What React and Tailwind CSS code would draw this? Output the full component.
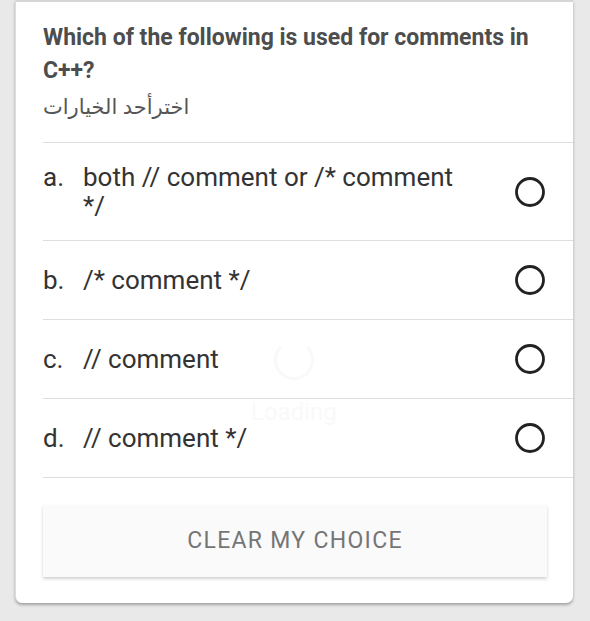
import React from 'react';

const OPTIONS = [
  { key: 'a', text: 'both // comment or /* comment */', tall: true },
  { key: 'b', text: '/* comment */' },
  { key: 'c', text: '// comment' },
  { key: 'd', text: '// comment */' },
];

function Radio() {
  return (
    <svg width="32" height="32" viewBox="0 0 32 32" className="shrink-0">
      <circle cx="16" cy="16" r="13.5" fill="none" stroke="#222" strokeWidth="2.8" />
    </svg>
  );
}

export default function App() {
  return (
    <div className="w-[590px] h-[621px] bg-[#e9e9e9] overflow-hidden" style={{ fontFamily: 'Roboto, "Noto Sans", sans-serif' }}>
      <div className="relative ml-[15px] w-[558px] bg-white rounded-b-[7px] shadow-[0_2px_3px_rgba(0,0,0,0.3)] border-l border-[#dcdcdc]">
        <div className="h-[2px] bg-[#d6d6d6]" />
        <div className="pl-[27px]">
          {/* question */}
          <div className="pt-[19px] pb-[19px] pr-[30px] border-b border-[#dedede]">
            <div className="text-[23px] leading-[33px] font-bold text-[#4d4d4d]">
              Which of the following is used for comments in C++?
            </div>
            <div className="mt-[2px] text-[21px] leading-[34px] text-[#555]" style={{ fontFamily: '"Noto Sans", "DejaVu Sans", sans-serif' }}>
              اخترأحد الخيارات
            </div>
          </div>

          {/* options */}
          {OPTIONS.map((o) => (
            <div
              key={o.key}
              className={`flex items-center border-b border-[#dedede] pr-[27px] ${o.tall ? 'h-[98px]' : 'h-[79px]'}`}
            >
              <div className={`flex flex-1 text-[26px] leading-[29px] text-[#333] ${o.tall ? 'self-start pt-[20px]' : ''}`}>
                <span className="w-[40px] shrink-0">{o.key}.</span>
                <span className="w-[380px]">{o.text}</span>
              </div>
              <Radio />
            </div>
          ))}

          <div className="pt-[27px] pb-[26px] pr-[26px]">
            <div className="h-[72px] bg-[#fafafa] shadow-[0_2px_3px_rgba(0,0,0,0.18)] flex items-center justify-center text-[23px] tracking-[1.3px] text-[#757575]">
              CLEAR MY CHOICE
            </div>
          </div>
        </div>

        {/* faint loading overlay */}
        <div className="absolute left-[235px] top-[340px] flex flex-col items-center pointer-events-none opacity-[0.03]">
          <div className="w-[40px] h-[40px] rounded-full border-[3px] border-[#555] border-t-transparent" />
          <div className="mt-[14px] text-[24px] text-[#555]">Loading</div>
        </div>
      </div>
    </div>
  );
}
